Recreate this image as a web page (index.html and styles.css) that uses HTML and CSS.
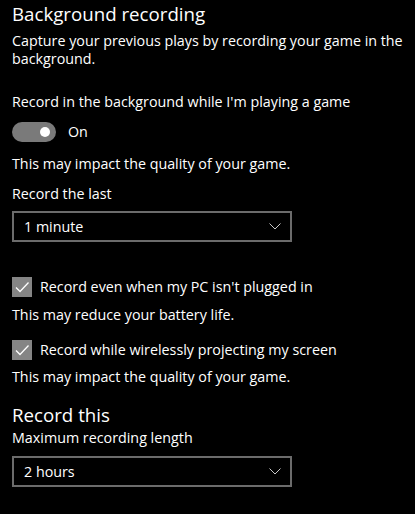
FILE: index.html
```html
<!DOCTYPE html>
<html lang="en">
  <head>
    <meta charset="UTF-8" />
    <title>Background recording</title>
    <link rel="stylesheet" href="styles.css">
  </head>
  <body>
    <div class="page">
      <h2 class="title">Background recording</h2>
      <p class="desc">Capture your previous plays by recording your game in the background.</p>

      <p class="text label-bg">Record in the background while I'm playing a game</p>
      <div class="toggle-row">
        <span class="toggle"><span class="knob"></span></span>
        <span class="text">On</span>
      </div>
      <p class="text note-1">This may impact the quality of your game.</p>
      <p class="text label-last">Record the last</p>
      <div class="select select-1">
        <span class="text">1 minute</span>
        <svg class="chev" width="12" height="7" viewBox="0 0 12 7"><path d="M0.5 0.5 L6 6 L11.5 0.5" fill="none" stroke="#c8c8c8" stroke-width="1"/></svg>
      </div>

      <div class="check-row check-1">
        <span class="box"><svg width="20" height="20" viewBox="0 0 20 20"><path d="M4 10.5 L8 14.5 L16.5 5.5" fill="none" stroke="#fff" stroke-width="1.3"/></svg></span>
        <span class="text">Record even when my PC isn't plugged in</span>
      </div>
      <p class="text note-2">This may reduce your battery life.</p>
      <div class="check-row check-2">
        <span class="box"><svg width="20" height="20" viewBox="0 0 20 20"><path d="M4 10.5 L8 14.5 L16.5 5.5" fill="none" stroke="#fff" stroke-width="1.3"/></svg></span>
        <span class="text">Record while wirelessly projecting my screen</span>
      </div>
      <p class="text note-3">This may impact the quality of your game.</p>

      <h2 class="title title-2">Record this</h2>
      <p class="text label-max">Maximum recording length</p>
      <div class="select select-2">
        <span class="text">2 hours</span>
        <svg class="chev" width="12" height="7" viewBox="0 0 12 7"><path d="M0.5 0.5 L6 6 L11.5 0.5" fill="none" stroke="#c8c8c8" stroke-width="1"/></svg>
      </div>
    </div>
  </body>
</html>
```

FILE: styles.css
```css
html {
  font-family: "Open Sans", "Noto Sans", sans-serif;
  color: #fff;
  background: #000;
}
body {
  margin: 0;
  padding: 0;
}
.page {
  display: flex;
  flex-direction: column;
  align-items: flex-start;
  padding: 1px 0 0 12px;
}
p {
  margin: 0;
}
.title {
  margin: 0;
  font-size: 18.7px;
  font-weight: 400;
  line-height: 26px;
}
.title-2 {
  margin-top: 15px;
}
.text {
  font-size: 14.3px;
  line-height: 20px;
}
.desc {
  margin-top: 5px;
  font-size: 14.3px;
  line-height: 18px;
  width: 400px;
}
.label-bg {
  margin-top: 24px;
}
.toggle-row {
  margin-top: 10px;
  display: flex;
  align-items: center;
  gap: 12px;
  height: 20px;
}
.toggle {
  display: flex;
  align-items: center;
  justify-content: flex-end;
  width: 44px;
  height: 20px;
  border-radius: 10px;
  background: #7a7a7a;
  padding-right: 6px;
  box-sizing: border-box;
}
.knob {
  width: 10px;
  height: 10px;
  border-radius: 50%;
  background: #fff;
}
.note-1 {
  margin-top: 12px;
}
.label-last {
  margin-top: 10px;
}
.select {
  display: flex;
  align-items: center;
  justify-content: space-between;
  box-sizing: border-box;
  width: 280px;
  height: 31px;
  border: 2px solid #6b6b6b;
  padding: 0 9px 0 10px;
}
.select-1 {
  margin-top: 7px;
}
.select-2 {
  margin-top: 8px;
}
.check-row {
  display: flex;
  align-items: center;
  gap: 8px;
  height: 20px;
}
.check-1 {
  margin-top: 35px;
}
.check-2 {
  margin-top: 15px;
}
.box {
  display: flex;
  width: 20px;
  height: 20px;
  background: #858585;
}
.note-2 {
  margin-top: 8px;
}
.note-3 {
  margin-top: 7px;
}
```
